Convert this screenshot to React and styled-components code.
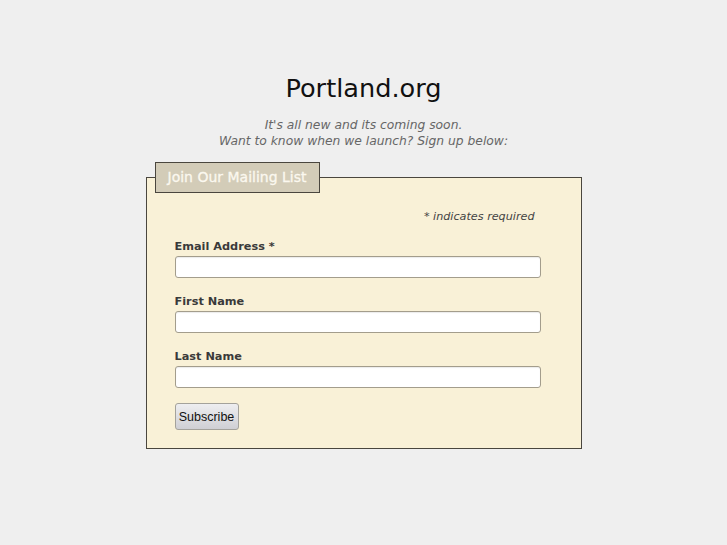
import React from 'react';
import styled, { createGlobalStyle } from 'styled-components';

const GlobalStyle = createGlobalStyle`
    html, body {
        margin: 0;
        padding: 0;
        background: #efefef;
    }
    body {
        font-family: "DejaVu Sans", Verdana, sans-serif;
    }
`;

const Page = styled.div`
    width: 727px;
    min-height: 545px;
    display: flex;
    flex-direction: column;
    align-items: center;
    padding-top: 71px;
    box-sizing: border-box;
`;

const Title = styled.h1`
    margin: 0;
    font-size: 25.6px;
    font-weight: normal;
    line-height: 34px;
    color: #111;
`;

const Tagline = styled.p`
    margin: 12px 0 0;
    font-size: 12.3px;
    line-height: 16px;
    font-style: italic;
    color: #666;
    text-align: center;
`;

const Box = styled.fieldset`
    width: 436px;
    box-sizing: border-box;
    margin: 13px 0 0;
    padding: 0 40px 18px 28px;
    border: 1px solid #4a463e;
    background: #f9f1d7;
    min-width: 0;
`;

const Legend = styled.legend`
    margin-left: -20px;
    padding: 0 12px;
    height: 31px;
    line-height: 29px;
    box-sizing: border-box;
    border: 1px solid #4a463e;
    background: #d3ccb8;
    color: #fbf8ef;
    font-size: 14px;
    -webkit-text-stroke: 0.3px #fbf8ef;
`;

const Required = styled.div`
    text-align: right;
    padding-right: 6px;
    margin-top: 16px;
    font-size: 11.2px;
    font-style: italic;
    color: #444;
    line-height: 16px;
`;

const Field = styled.div`
    display: flex;
    flex-direction: column;
    margin-top: ${p => p.$first ? '14px' : '16px'};
`;

const Label = styled.label`
    font-size: 11.3px;
    font-weight: bold;
    color: #3a3a3a;
    line-height: 14px;
    margin-bottom: 3px;
    padding-top: 1px;
`;

const Input = styled.input`
    width: 100%;
    height: 22px;
    margin-top: -1px;
    box-sizing: border-box;
    border: 1px solid #a39d8c;
    border-radius: 3px;
    background: #fff;
    box-shadow: inset 0 1px 1px rgba(0, 0, 0, 0.08);
    padding: 2px 4px;
    font: inherit;
`;

const Button = styled.button`
    margin-top: 15px;
    width: 64px;
    height: 27px;
    box-sizing: border-box;
    border: 1px solid #a4a29b;
    border-radius: 3px;
    background: linear-gradient(#eeeef0, #cfcfd4);
    color: #111;
    font-family: "Liberation Sans", Arial, sans-serif;
    font-size: 12.5px;
    padding: 0;
`;

const App = () => (
    <>
        <GlobalStyle />
        <Page>
            <Title>Portland.org</Title>
            <Tagline>
                It's all new and its coming soon.
                <br />
                Want to know when we launch? Sign up below:
            </Tagline>
            <Box>
                <Legend>Join Our Mailing List</Legend>
                <Required>* indicates required</Required>
                <Field $first>
                    <Label htmlFor="mce-email">Email Address *</Label>
                    <Input id="mce-email" type="email" />
                </Field>
                <Field>
                    <Label htmlFor="mce-fname">First Name</Label>
                    <Input id="mce-fname" type="text" />
                </Field>
                <Field>
                    <Label htmlFor="mce-lname">Last Name</Label>
                    <Input id="mce-lname" type="text" />
                </Field>
                <div>
                    <Button type="button">Subscribe</Button>
                </div>
            </Box>
        </Page>
    </>
);

export default App;
